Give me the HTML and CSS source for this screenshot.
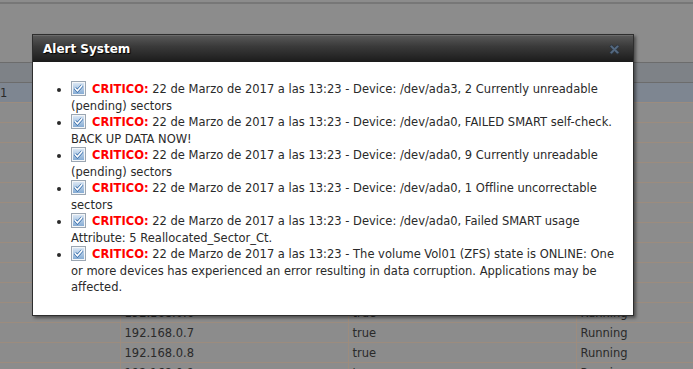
FILE: index.html
```html
<!DOCTYPE html>
<html lang="es">
<head>
    <meta charset="UTF-8">
    <title>Alert System</title>
    <link rel="stylesheet" href="styles.css">
</head>
<body>
    <div class="toolbar"></div>
    <table class="grid">
        <colgroup>
            <col class="c-id">
            <col class="c-ip">
            <col class="c-flag">
            <col class="c-state">
        </colgroup>
        <tr class="head"><th></th><th></th><th></th><th></th></tr>
        <tr class="selected"><td>1</td><td></td><td></td><td></td></tr>
        <tr><td></td><td>192.168.0.1</td><td>true</td><td>Running</td></tr>
        <tr><td></td><td>192.168.0.1</td><td>true</td><td>Running</td></tr>
        <tr><td></td><td>192.168.0.1</td><td>true</td><td>Running</td></tr>
        <tr><td></td><td>192.168.0.1</td><td>true</td><td>Running</td></tr>
        <tr><td></td><td>192.168.0.1</td><td>true</td><td>Running</td></tr>
        <tr><td></td><td>192.168.0.1</td><td>true</td><td>Running</td></tr>
        <tr><td></td><td>192.168.0.2</td><td>true</td><td>Running</td></tr>
        <tr><td></td><td>192.168.0.3</td><td>true</td><td>Running</td></tr>
        <tr><td></td><td>192.168.0.4</td><td>true</td><td>Running</td></tr>
        <tr><td></td><td>192.168.0.5</td><td>true</td><td>Running</td></tr>
        <tr><td></td><td>192.168.0.6</td><td>true</td><td>Running</td></tr>
        <tr><td></td><td>192.168.0.7</td><td>true</td><td>Running</td></tr>
        <tr><td></td><td>192.168.0.8</td><td>true</td><td>Running</td></tr>
        <tr><td></td><td>192.168.0.9</td><td>true</td><td>Running</td></tr>
    </table>

    <svg width="0" height="0" class="defs">
        <defs>
            <linearGradient id="cb" x1="0" y1="0" x2="0" y2="1">
                <stop offset="0" stop-color="#d9e6f4"/>
                <stop offset="1" stop-color="#86acd4"/>
            </linearGradient>
            <symbol id="check" viewBox="0 0 15 15">
                <rect x="0.5" y="0.5" width="14" height="14" fill="#f4f6f8" stroke="#9ba6b2"/>
                <rect x="2" y="2" width="11" height="11" fill="url(#cb)"/>
                <path d="M4 7.3 L6.4 9.8 L11.2 4.4" fill="none" stroke="#2f67a6" stroke-width="3"/>
                <path d="M4 7.3 L6.4 9.8 L11.2 4.4" fill="none" stroke="#fff" stroke-width="1.6"/>
            </symbol>
        </defs>
    </svg>

    <div class="dialog">
        <div class="dialog-title">
            <span>Alert System</span>
            <svg class="close" width="11" height="11" viewBox="0 0 11 11">
                <path d="M0.8 2.6 L2.6 0.8 L5.5 3.7 L8.4 0.8 L10.2 2.6 L7.3 5.5 L10.2 8.4 L8.4 10.2 L5.5 7.3 L2.6 10.2 L0.8 8.4 L3.7 5.5 Z" fill="#556a82" stroke="#2a3440" stroke-width="0.9"/>
            </svg>
        </div>
        <div class="dialog-body">
            <ul class="alerts">
                <li><svg class="check"><use href="#check"/></svg><b>CRITICO:</b> 22 de Marzo de 2017 a las 13:23 - Device: /dev/ada3, 2 Currently unreadable (pending) sectors</li>
                <li><svg class="check"><use href="#check"/></svg><b>CRITICO:</b> 22 de Marzo de 2017 a las 13:23 - Device: /dev/ada0, FAILED SMART self-check. BACK UP DATA NOW!</li>
                <li><svg class="check"><use href="#check"/></svg><b>CRITICO:</b> 22 de Marzo de 2017 a las 13:23 - Device: /dev/ada0, 9 Currently unreadable (pending) sectors</li>
                <li><svg class="check"><use href="#check"/></svg><b>CRITICO:</b> 22 de Marzo de 2017 a las 13:23 - Device: /dev/ada0, 1 Offline uncorrectable sectors</li>
                <li><svg class="check"><use href="#check"/></svg><b>CRITICO:</b> 22 de Marzo de 2017 a las 13:23 - Device: /dev/ada0, Failed SMART usage Attribute: 5 Reallocated_Sector_Ct.</li>
                <li><svg class="check"><use href="#check"/></svg><b>CRITICO:</b> 22 de Marzo de 2017 a las 13:23 - The volume Vol01 (ZFS) state is ONLINE: One or more devices has experienced an error resulting in data corruption. Applications may be affected.</li>
            </ul>
        </div>
    </div>
</body>
</html>
```

FILE: styles.css
```css
body {
    margin: 0;
    background-color: #8c8c8c;
    font-family: "DejaVu Sans", Verdana, sans-serif;
    font-size: 11.5px;
    color: #2a2a2a;
    overflow: hidden;
    height: 369px;
}
.defs {
    position: absolute;
}
.toolbar {
    height: 60px;
    border-top: 2px solid #777;
    margin-top: 2px;
    box-sizing: border-box;
}
.grid {
    border-collapse: collapse;
    width: 780px;
    table-layout: fixed;
}
.c-id { width: 120px; }
.c-ip { width: 228px; }
.c-flag { width: 228px; }
.grid th,
.grid td {
    height: 19px;
    padding: 0 4px;
    border-bottom: 1px solid #9c8c7e;
    border-right: 1px solid #9c8c7e;
    text-align: left;
    white-space: nowrap;
    overflow: hidden;
    font-weight: normal;
}
.grid td:first-child {
    padding-left: 0;
}
.grid tr.head th {
    background-color: #7e8287;
    border-top: 1px solid #6c6c6c;
    border-bottom: 1px solid #6c6c6c;
    border-right: none;
}
.grid tr.selected td {
    background-color: #7e8691;
    border-right: none;
}
.dialog {
    position: absolute;
    left: 32px;
    top: 34px;
    width: 600px;
    height: 280px;
    background-color: #fff;
    border: 1px solid #2e2e2e;
    box-shadow: 2px 2px 3px rgba(0, 0, 0, 0.45);
}
.dialog-title {
    height: 27px;
    box-sizing: border-box;
    padding: 0 13px 0 10px;
    display: flex;
    align-items: center;
    justify-content: space-between;
    background: linear-gradient(#575757, #3a3a3a 40%, #1b1b1b);
    border-top: 1px solid #6a6a6a;
    color: #fff;
    font-size: 12px;
    font-weight: bold;
    text-shadow: 1px 1px 1px #000;
}
.dialog-body {
    padding: 8px 10px 8px 0;
}
.alerts {
    margin: 11px 0;
    padding-left: 38px;
    line-height: 16.5px;
}
.alerts b {
    color: #ff0000;
}
.check {
    width: 15px;
    height: 15px;
    vertical-align: -3px;
    margin-right: 6px;
}
```
